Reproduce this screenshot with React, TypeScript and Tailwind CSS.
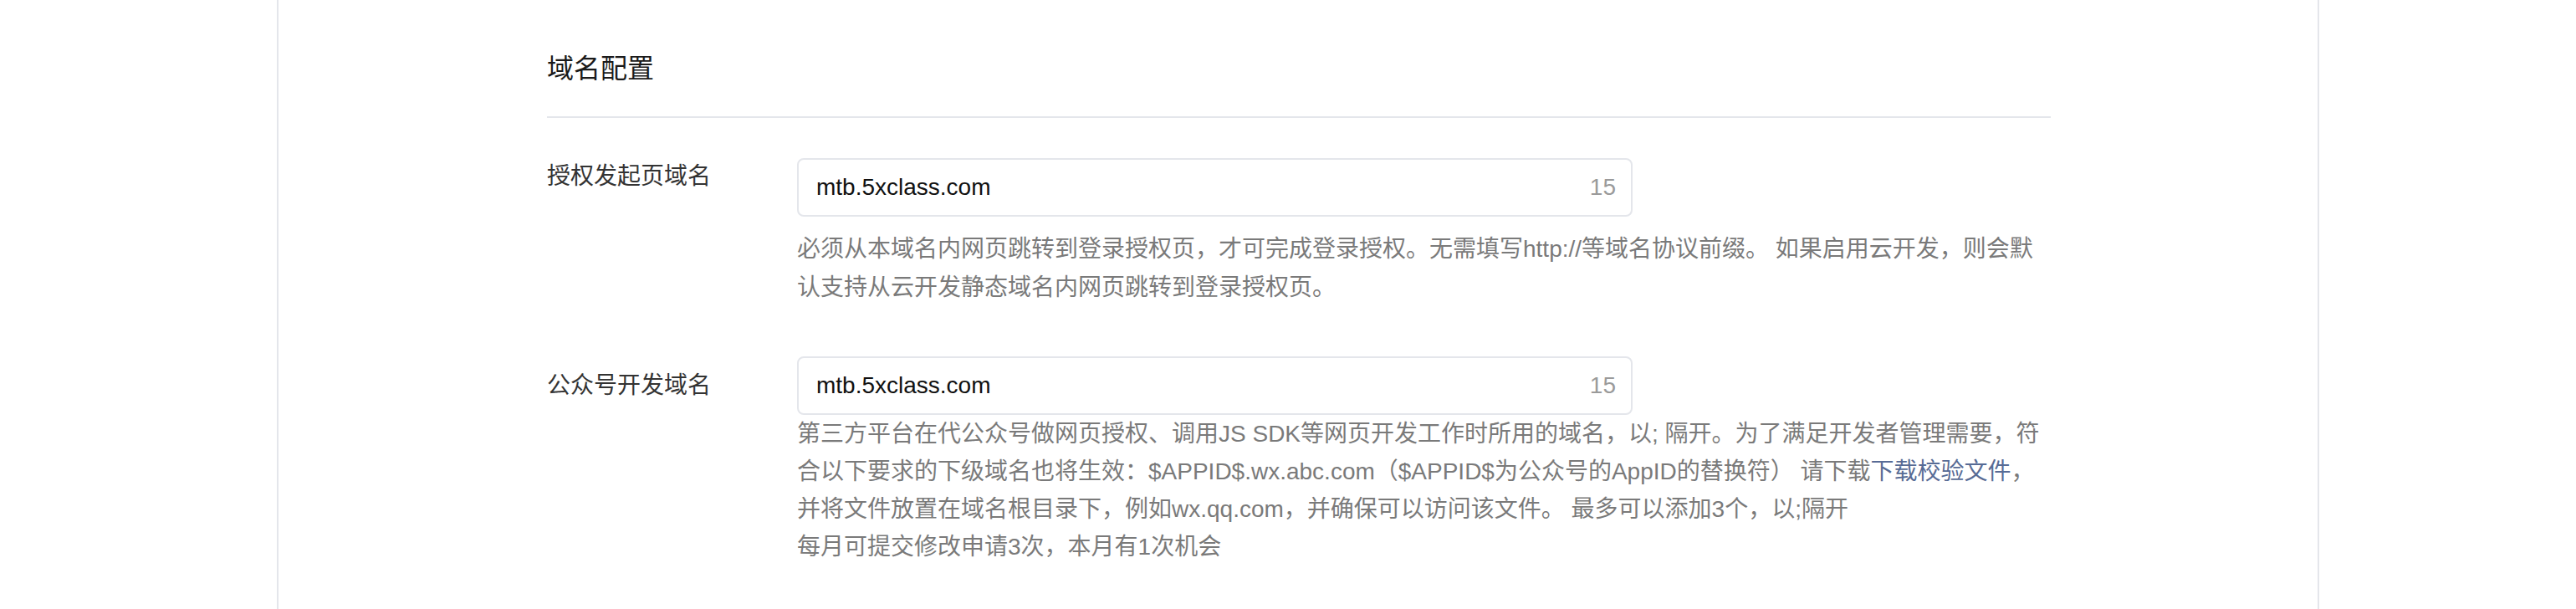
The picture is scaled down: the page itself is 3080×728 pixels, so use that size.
import React from "react";

const font = { fontFamily: '"Liberation Sans", "Noto Sans CJK SC", sans-serif' };

export default function App() {
  return (
    <div className="w-full min-h-[728px] bg-white" style={font}>
      <div className="ml-[331px] w-[2442px] min-h-[728px] border-x-2 border-[#e4e6eb] pl-[321px]">
        <div className="w-[1798px]">
          <div className="pt-[58px] pb-[33px] border-b-2 border-[#e4e6eb]">
            <h2 className="text-[32px] leading-[48px] text-[#1a1a1a] font-normal">域名配置</h2>
          </div>

          {/* Row 1 */}
          <div className="flex mt-[48px]">
            <div className="w-[299px] shrink-0 text-[28px] leading-[43px] text-[#333]">授权发起页域名</div>
            <div className="flex-1">
              <div className="w-[999px] h-[70px] border-2 border-[#e4e6eb] rounded-[8px] flex items-center justify-between pl-[21px] pr-[18px]">
                <span className="text-[28px] text-[#111]">mtb.5xclass.com</span>
                <span className="text-[28px] text-[#9a9a9a]">15</span>
              </div>
              <div className="mt-[16px] text-[28px] leading-[46px] text-[#7a7a7a] whitespace-nowrap">
                必须从本域名内网页跳转到登录授权页，才可完成登录授权。无需填写http://等域名协议前缀。 如果启用云开发，则会默
                <br />
                认支持从云开发静态域名内网页跳转到登录授权页。
              </div>
            </div>
          </div>

          {/* Row 2 */}
          <div className="flex mt-[59px]">
            <div className="w-[299px] shrink-0 text-[28px] leading-[70px] text-[#333]">公众号开发域名</div>
            <div className="flex-1">
              <div className="w-[999px] h-[70px] border-2 border-[#e4e6eb] rounded-[8px] flex items-center justify-between pl-[21px] pr-[18px]">
                <span className="text-[28px] text-[#111]">mtb.5xclass.com</span>
                <span className="text-[28px] text-[#9a9a9a]">15</span>
              </div>
              <div className="text-[28px] leading-[45px] text-[#7a7a7a] whitespace-nowrap">
                第三方平台在代公众号做网页授权、调用JS SDK等网页开发工作时所用的域名，以; 隔开。为了满足开发者管理需要，符
                <br />
                合以下要求的下级域名也将生效：$APPID$.wx.abc.com（$APPID$为公众号的AppID的替换符） 请下载
                <a className="text-[#576b95]">下载校验文件</a>，
                <br />
                并将文件放置在域名根目录下，例如wx.qq.com，并确保可以访问该文件。 最多可以添加3个，以;隔开
              </div>
              <div className="text-[28px] leading-[45px] text-[#7a7a7a] whitespace-nowrap">
                每月可提交修改申请3次，本月有1次机会
              </div>
            </div>
          </div>
        </div>
      </div>
    </div>
  );
}
